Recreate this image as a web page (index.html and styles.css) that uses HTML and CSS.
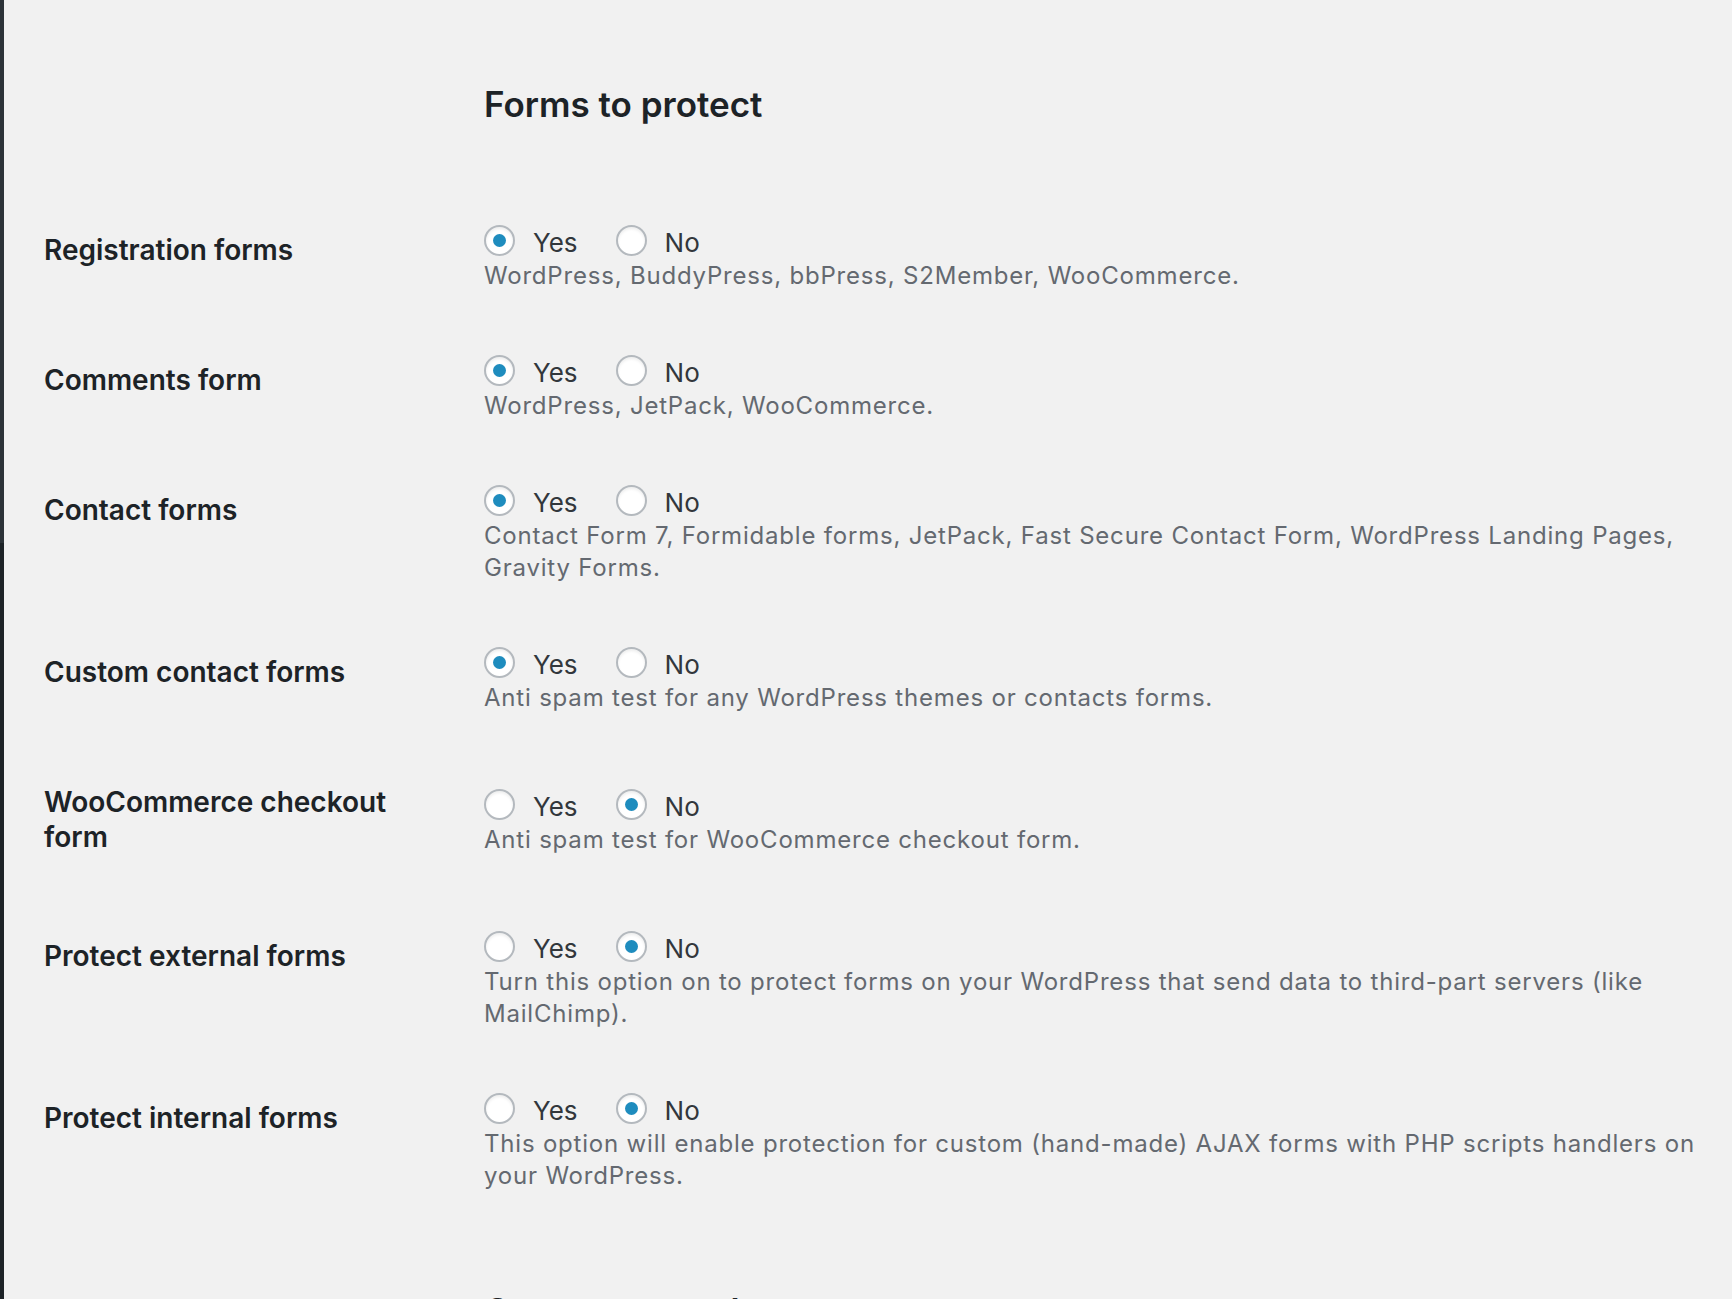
FILE: index.html
```html
<!DOCTYPE html>
<html lang="en">
<head>
<meta charset="utf-8">
<title>Forms to protect</title>
<link rel="stylesheet" href="styles.css">
</head>
<body>
<div class="adminmenu">
  <div class="adminmenu-top"></div>
  <div class="adminmenu-bottom"></div>
</div>
<main class="main">
  <h2 class="section-title">Forms to protect</h2>
  <div class="form-table">
    <div class="row-label">Registration forms</div>
    <div class="row-field">
      <div class="choices">
        <label class="choice"><span class="radio checked"></span><span class="choice-text">Yes</span></label>
        <label class="choice"><span class="radio"></span><span class="choice-text">No</span></label>
      </div>
      <p class="desc">WordPress, BuddyPress, bbPress, S2Member, WooCommerce.</p>
    </div>

    <div class="row-label">Comments form</div>
    <div class="row-field">
      <div class="choices">
        <label class="choice"><span class="radio checked"></span><span class="choice-text">Yes</span></label>
        <label class="choice"><span class="radio"></span><span class="choice-text">No</span></label>
      </div>
      <p class="desc">WordPress, JetPack, WooCommerce.</p>
    </div>

    <div class="row-label">Contact forms</div>
    <div class="row-field">
      <div class="choices">
        <label class="choice"><span class="radio checked"></span><span class="choice-text">Yes</span></label>
        <label class="choice"><span class="radio"></span><span class="choice-text">No</span></label>
      </div>
      <p class="desc">Contact Form 7, Formidable forms, JetPack, Fast Secure Contact Form, WordPress Landing Pages, Gravity Forms.</p>
    </div>

    <div class="row-label">Custom contact forms</div>
    <div class="row-field">
      <div class="choices">
        <label class="choice"><span class="radio checked"></span><span class="choice-text">Yes</span></label>
        <label class="choice"><span class="radio"></span><span class="choice-text">No</span></label>
      </div>
      <p class="desc">Anti spam test for any WordPress themes or contacts forms.</p>
    </div>

    <div class="row-label">WooCommerce checkout form</div>
    <div class="row-field">
      <div class="choices">
        <label class="choice"><span class="radio"></span><span class="choice-text">Yes</span></label>
        <label class="choice"><span class="radio checked"></span><span class="choice-text">No</span></label>
      </div>
      <p class="desc">Anti spam test for WooCommerce checkout form.</p>
    </div>

    <div class="row-label">Protect external forms</div>
    <div class="row-field">
      <div class="choices">
        <label class="choice"><span class="radio"></span><span class="choice-text">Yes</span></label>
        <label class="choice"><span class="radio checked"></span><span class="choice-text">No</span></label>
      </div>
      <p class="desc">Turn this option on to protect forms on your WordPress that send data to third-part servers (like MailChimp).</p>
    </div>

    <div class="row-label">Protect internal forms</div>
    <div class="row-field">
      <div class="choices">
        <label class="choice"><span class="radio"></span><span class="choice-text">Yes</span></label>
        <label class="choice"><span class="radio checked"></span><span class="choice-text">No</span></label>
      </div>
      <p class="desc">This option will enable protection for custom (hand-made) AJAX forms with PHP scripts handlers on your WordPress.</p>
    </div>
  </div>
  <h2 class="section-title section-next">Comments and messages</h2>
</main>
</body>
</html>
```

FILE: styles.css
```css
html, body {
  height: 100%;
}

body {
  margin: 0;
  background: #f1f1f1;
  font-family: Inter, "Noto Sans", "Liberation Sans", sans-serif;
  display: flex;
  overflow: hidden;
}

.adminmenu {
  width: 4px;
  flex: none;
  display: flex;
  flex-direction: column;
}

.adminmenu-top {
  height: 543px;
  background: #2c3338;
}

.adminmenu-bottom {
  flex: 1;
  background: #1d2327;
}

.main {
  flex: 1;
  padding: 84px 20px 0 40px;
}

.section-title {
  margin: 0 0 0 440px;
  font-size: 35px;
  line-height: 40px;
  font-weight: 600;
  color: #1d2327;
}

.section-next {
  margin-top: 71px;
}

.form-table {
  display: grid;
  grid-template-columns: 440px 1fr;
  margin-top: 66px;
}

.row-label {
  align-self: start;
  padding: 43px 40px 41px 0;
  font-size: 28px;
  line-height: 35px;
  font-weight: 600;
  color: #1d2327;
}

.row-field {
  align-self: center;
  padding: 29px 0 28px;
}

.choices {
  display: flex;
  align-items: center;
  height: 36px;
}

.choice {
  display: flex;
  align-items: center;
  margin-right: 38px;
  font-size: 26px;
  color: #32373c;
}

.choice-text {
  padding-top: 10px;
}

.radio {
  box-sizing: border-box;
  width: 31px;
  height: 31px;
  margin: 7px 18px 0 0;
  border: 2px solid #b4b9be;
  border-radius: 50%;
  background: #fff;
  box-shadow: inset 0 2px 3px rgba(0, 0, 0, 0.07);
  display: flex;
  align-items: center;
  justify-content: center;
}

.radio.checked::before {
  content: "";
  width: 13px;
  height: 13px;
  border-radius: 50%;
  background: #1e8cbe;
}

.desc {
  margin: 5px 0 0;
  font-size: 24px;
  line-height: 32px;
  letter-spacing: 0.8px;
  color: #646970;
}
```
